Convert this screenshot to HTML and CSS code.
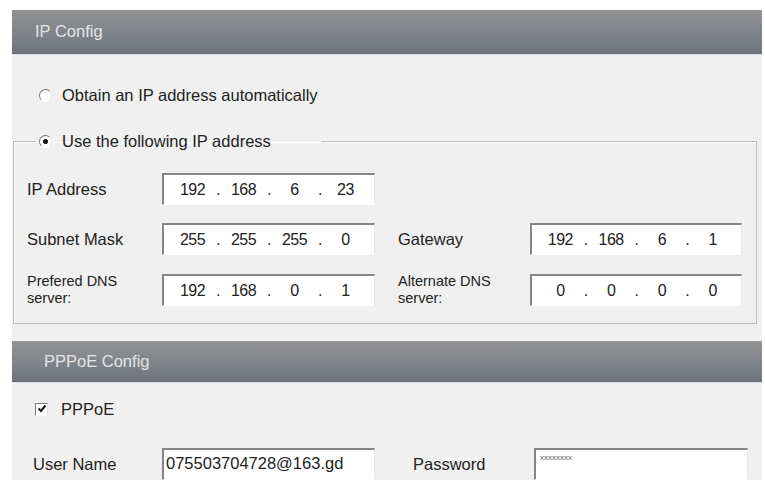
FILE: index.html
```html
<!DOCTYPE html>
<html lang="en">
<head>
    <meta charset="UTF-8">
    <title>Network Settings</title>
    <link rel="stylesheet" href="styles.css">
</head>
<body>
    <div class="wrap">
        <!-- IP settings -->
        <div class="panel-head">IP Config</div>
        <div class="panel-body">
            <label class="choice first">
                <span class="radio"></span>
                Obtain an IP address automatically
            </label>

            <fieldset class="group">
                <legend>
                    <span class="radio on"></span>
                    Use the following IP address
                </legend>

                <div class="grid">
                    <div class="lbl">IP Address</div>
                    <div class="ip">
                        <span>192</span><i>.</i><span>168</span><i>.</i><span>6</span><i>.</i><span>23</span>
                    </div>
                </div>

                <div class="grid">
                    <div class="lbl">Subnet Mask</div>
                    <div class="ip">
                        <span>255</span><i>.</i><span>255</span><i>.</i><span>255</span><i>.</i><span>0</span>
                    </div>
                    <div class="lbl right">Gateway</div>
                    <div class="ip">
                        <span>192</span><i>.</i><span>168</span><i>.</i><span>6</span><i>.</i><span>1</span>
                    </div>
                </div>

                <div class="grid">
                    <div class="lbl two">Prefered DNS<br>server:</div>
                    <div class="ip">
                        <span>192</span><i>.</i><span>168</span><i>.</i><span>0</span><i>.</i><span>1</span>
                    </div>
                    <div class="lbl right two">Alternate DNS<br>server:</div>
                    <div class="ip">
                        <span>0</span><i>.</i><span>0</span><i>.</i><span>0</span><i>.</i><span>0</span>
                    </div>
                </div>
            </fieldset>
        </div>

        <!-- PPPoE settings -->
        <div class="panel-head pppoe">PPPoE Config</div>
        <div class="panel-body">
            <label class="choice check-row">
                <span class="check">
                    <svg width="10" height="10" viewBox="0 0 10 10">
                        <path d="M1.5 4.5 L4 7 L8.5 1.5" fill="none" stroke="#111" stroke-width="2"/>
                    </svg>
                </span>
                PPPoE
            </label>

            <div class="grid user-row">
                <div class="lbl">User Name</div>
                <div class="field">075503704728@163.gd</div>
                <div class="lbl right">Password</div>
                <div class="field pass">xxxxxxxx</div>
            </div>
        </div>
    </div>
</body>
</html>
```

FILE: styles.css
```css
body {
    margin: 0;
    background: #fff;
    font-family: "Liberation Sans", Arial, sans-serif;
    color: #222;
}

.wrap {
    width: 750px;
    padding: 10px 0 0 12px;
}

.panel-head {
    height: 45px;
    line-height: 43px;
    padding-left: 23px;
    background: linear-gradient(#939393, #7d8188 60%, #6d7178);
    border-bottom: 1px solid #d8dae0;
    box-sizing: border-box;
    color: #e4e4e4;
    font-size: 16.5px;
}

.panel-head.pppoe {
    height: 42px;
    line-height: 40px;
    padding-left: 32px;
}

.panel-body {
    background: #f0f0f0;
    overflow: hidden;
}

.choice {
    display: flex;
    align-items: center;
    gap: 10px;
    height: 20px;
    font-size: 16.5px;
}

.choice.first {
    margin: 30px 0 0 27px;
}

.radio {
    flex: none;
    width: 11px;
    height: 11px;
    border-radius: 50%;
    background: #fff;
    border: 1px solid;
    border-color: #7a7a7a #e4e4e4 #fff #7a7a7a;
    position: relative;
}

.radio.on::after {
    content: "";
    position: absolute;
    left: 3px;
    top: 3px;
    width: 5px;
    height: 5px;
    border-radius: 50%;
    background: #111;
}

.group {
    margin: 26px 5px 17px 1px;
    padding: 22px 0 18px 13px;
    border: 1px solid #bdbdbd;
    box-shadow: inset 1px 1px 0 #fff;
}

.group legend {
    display: flex;
    align-items: center;
    gap: 10px;
    height: 20px;
    margin-left: 9px;
    padding: 0 50px 0 3px;
    font-size: 16.5px;
}

.grid {
    display: grid;
    grid-template-columns: 135px 213px 155px 212px;
    align-items: center;
    height: 32px;
    margin-bottom: 18px;
}

.grid:last-child {
    margin-bottom: 0;
}

.lbl {
    font-size: 16.5px;
}

.lbl.right {
    padding-left: 23px;
}

.lbl.two {
    align-self: start;
    font-size: 14.5px;
    line-height: 17px;
}

.ip,
.field {
    height: 32px;
    box-sizing: border-box;
    background: #fff;
    border-top: 2px solid #858585;
    border-left: 2px solid #858585;
    border-right: 1px solid #e6e6e6;
    border-bottom: 1px solid #fff;
}

.ip {
    display: grid;
    grid-template-columns: 1fr 10px 1fr 10px 1fr 10px 1fr;
    align-items: center;
    padding: 0 8px;
    font-size: 16px;
    letter-spacing: -0.5px;
    text-align: center;
}

.ip i {
    font-style: normal;
}

.check-row {
    margin: 16px 0 0 23px;
    gap: 13px;
}

.check {
    flex: none;
    width: 11px;
    height: 11px;
    background: #fff;
    border: 1px solid;
    border-color: #7a7a7a #e4e4e4 #fff #7a7a7a;
    display: flex;
    align-items: center;
    justify-content: center;
}

.user-row {
    grid-template-columns: 129px 213px 159px 214px;
    margin: 29px 0 14px 21px;
}

.user-row .lbl.right {
    padding-left: 38px;
}

.field {
    font-size: 16.5px;
    padding: 4px 2px;
}

.field.pass {
    font-size: 8px;
    padding: 3px 4px;
    color: #555;
}
```
